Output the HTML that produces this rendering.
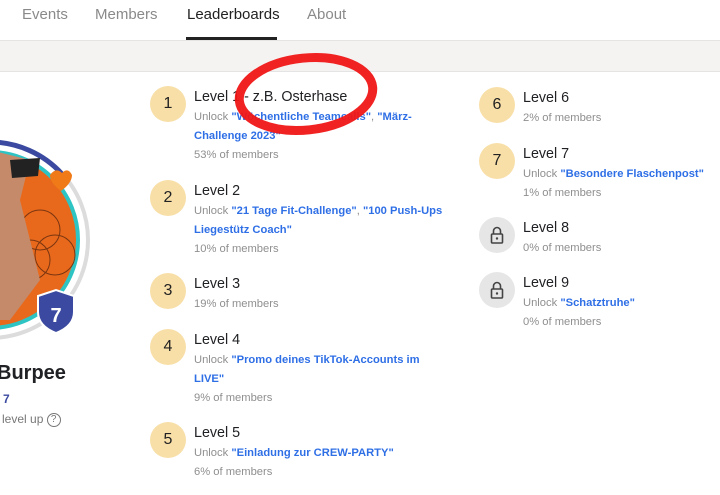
<!DOCTYPE html>
<html><head><meta charset="utf-8"><style>
*{margin:0;padding:0;box-sizing:border-box}
body{width:720px;height:495px;overflow:hidden;background:#fff;font-family:"Liberation Sans",Arial,sans-serif;position:relative}
.tab{position:absolute;top:6px;font-size:15px;color:#8a8a8a}
.hdr{position:absolute;left:0;top:40px;width:720px;height:32px;background:#f4f3f2;border-top:1px solid #e4e4e4;border-bottom:1px solid #e4e4e4}
.it{position:absolute;width:270px;white-space:nowrap}
.c{position:absolute;left:-44px;top:0;width:36px;height:36px;border-radius:50%;background:#f8dfa8;color:#222;font-size:16px;text-align:center;line-height:36px}
.c.g{background:#e6e6e6}
.t{font-size:14.3px;line-height:22px;color:#202124}
.s{font-size:11.2px;line-height:19px;color:#8f8f8f}
.b{color:#2f6fe6;font-weight:bold}
</style></head><body>
<div class="tab" style="left:22px">Events</div>
<div class="tab" style="left:95px">Members</div>
<div class="tab" style="left:187px;color:#222">Leaderboards</div>
<div class="tab" style="left:307px">About</div>
<div style="position:absolute;left:186px;top:37px;width:91px;height:3px;background:#222"></div>
<div class="hdr"></div>

<svg style="position:absolute;left:0;top:0" width="140" height="440">
<circle cx="-10" cy="240" r="98" fill="none" stroke="#dcdcdc" stroke-width="4"/>
<path d="M -10 142 A 98 98 0 0 1 62 174" fill="none" stroke="#3b4aa0" stroke-width="5"/>
<circle cx="-10" cy="240" r="88" fill="#e8691c" stroke="#2ec4c4" stroke-width="4"/>
<circle cx="40" cy="230" r="20" fill="none" stroke="#7a3510" stroke-width="1"/>
<circle cx="55" cy="255" r="20" fill="none" stroke="#7a3510" stroke-width="1"/>
<circle cx="30" cy="260" r="20" fill="none" stroke="#7a3510" stroke-width="1"/>
<path d="M-10 150 L30 160 L20 200 L40 280 L10 320 L-10 320Z" fill="#c48a6a"/>
<path d="M10 160 L40 158 L38 176 L12 178Z" fill="#222"/>
<path d="M50 175 q6 -8 12 -2 q6 -6 10 2 q0 8 -11 16 q-11 -8 -11 -16z" fill="#f07a18"/>
<path d="M38 296 L56 290 L74 296 L74 312 Q74 326 56 333 Q38 326 38 312Z" fill="#3b4aa0" stroke="#fff" stroke-width="2"/>
<text x="56" y="322" font-size="20" font-weight="bold" fill="#fff" text-anchor="middle" font-family="Liberation Sans">7</text>
</svg>
<div style="position:absolute;left:-3px;top:362px;font-size:20px;font-weight:bold;color:#202124">Burpee</div>
<div style="position:absolute;left:3px;top:392px;font-size:12px;font-weight:bold;color:#3b4aa0">7</div>
<div style="position:absolute;left:2px;top:412px;font-size:12px;color:#777">level up <span style="display:inline-block;width:14px;height:14px;border:1.5px solid #777;border-radius:50%;font-size:10px;text-align:center;line-height:11px;vertical-align:middle">?</span></div>

<div class="it" style="left:194px;top:86px"><div class="c">1</div><div class="t">Level 1 - z.B. Osterhase</div><div class="s">Unlock <span class="b">"Wöchentliche Teamcalls"</span>, <span class="b">"März-<br>Challenge 2023"</span></div><div class="s">53% of members</div></div>
<div class="it" style="left:194px;top:180px"><div class="c">2</div><div class="t">Level 2</div><div class="s">Unlock <span class="b">"21 Tage Fit-Challenge"</span>, <span class="b">"100 Push-Ups<br>Liegestütz Coach"</span></div><div class="s">10% of members</div></div>
<div class="it" style="left:194px;top:273px"><div class="c">3</div><div class="t">Level 3</div><div class="s">19% of members</div></div>
<div class="it" style="left:194px;top:329px"><div class="c">4</div><div class="t">Level 4</div><div class="s">Unlock <span class="b">"Promo deines TikTok-Accounts im<br>LIVE"</span></div><div class="s">9% of members</div></div>
<div class="it" style="left:194px;top:422px"><div class="c">5</div><div class="t">Level 5</div><div class="s">Unlock <span class="b">"Einladung zur CREW-PARTY"</span></div><div class="s">6% of members</div></div>

<div class="it" style="left:523px;top:87px"><div class="c">6</div><div class="t">Level 6</div><div class="s">2% of members</div></div>
<div class="it" style="left:523px;top:143px"><div class="c">7</div><div class="t">Level 7</div><div class="s">Unlock <span class="b">"Besondere Flaschenpost"</span></div><div class="s">1% of members</div></div>
<div class="it" style="left:523px;top:217px"><div class="c g"><svg width="36" height="36"><rect x="12.5" y="17" width="11" height="9" rx="1" fill="none" stroke="#444" stroke-width="1.6"/><path d="M14.5 17v-3a3.5 3.5 0 0 1 7 0v3" fill="none" stroke="#444" stroke-width="1.6"/><circle cx="18" cy="21.5" r="1.2" fill="#444"/></svg></div><div class="t">Level 8</div><div class="s">0% of members</div></div>
<div class="it" style="left:523px;top:272px"><div class="c g"><svg width="36" height="36"><rect x="12.5" y="17" width="11" height="9" rx="1" fill="none" stroke="#444" stroke-width="1.6"/><path d="M14.5 17v-3a3.5 3.5 0 0 1 7 0v3" fill="none" stroke="#444" stroke-width="1.6"/><circle cx="18" cy="21.5" r="1.2" fill="#444"/></svg></div><div class="t">Level 9</div><div class="s">Unlock <span class="b">"Schatztruhe"</span></div><div class="s">0% of members</div></div>

<svg style="position:absolute;left:0;top:0" width="720" height="495">
<ellipse cx="306" cy="94" rx="67" ry="36" transform="rotate(-6 306 94)" fill="none" stroke="#f01616" stroke-width="9" opacity="0.95"/>
</svg>
</body></html>
